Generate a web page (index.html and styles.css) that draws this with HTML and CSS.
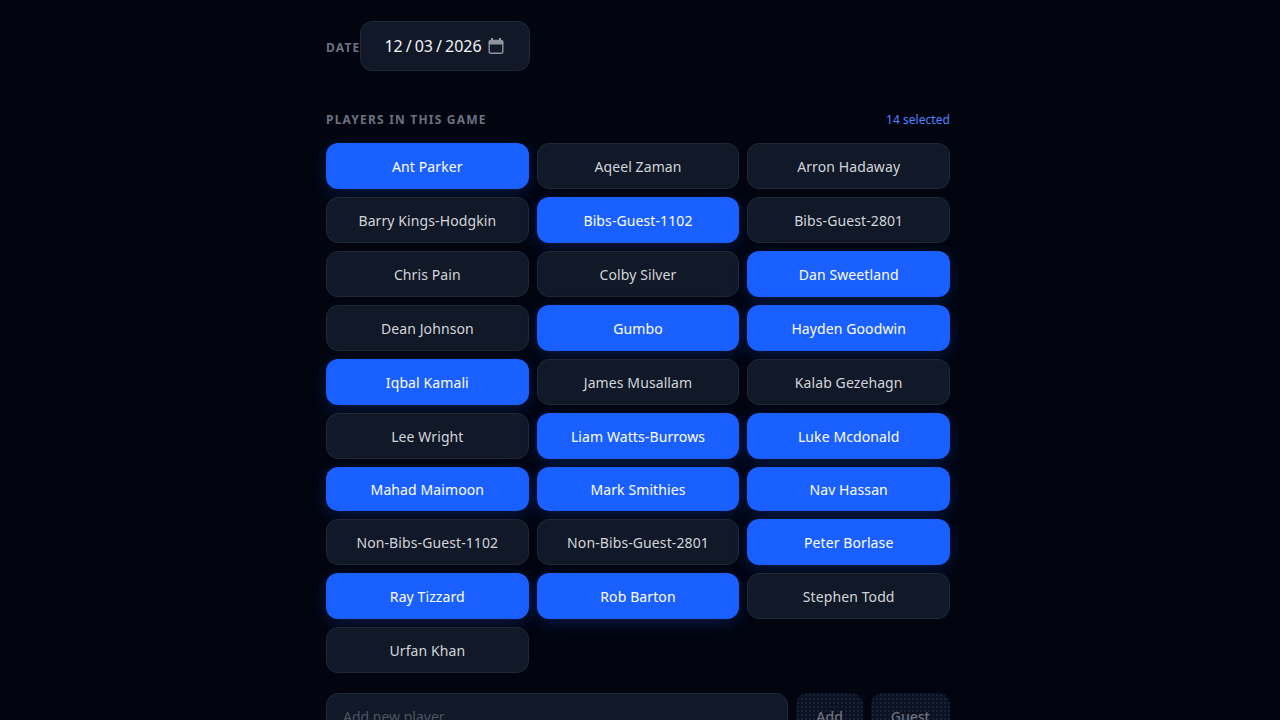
FILE: index.html
```html
<!DOCTYPE html>
<html lang="en">
<head>
<meta charset="utf-8">
<title>New game</title>
<link rel="stylesheet" href="styles.css">
</head>
<body>
<main class="page">
  <div class="date-row">
    <label class="label date-label">DATE</label>
    <div class="date-field">
      <span class="date-value"><span>12</span><span class="sep">/</span><span>03</span><span class="sep">/</span><span>2026</span></span>
      <svg class="cal" viewBox="0 0 16 16" width="16" height="16" aria-hidden="true">
        <path d="M.7 6.6h14.6V4a1.5 1.5 0 0 0-1.5-1.5H2.2A1.5 1.5 0 0 0 .7 4z" fill="currentColor"/>
        <rect x="1.2" y="2.5" width="13.6" height="12.8" rx="1.6" fill="none" stroke="currentColor" stroke-width="1.4"/>
        <path d="M4 0v3M12 0v3" stroke="currentColor" stroke-width="2" fill="none"/>
      </svg>
    </div>
  </div>
  <div class="section-head">
    <span class="label">PLAYERS IN THIS GAME</span>
    <span class="count">14 selected</span>
  </div>
  <div class="players">
    <button class="player on">Ant Parker</button>
    <button class="player">Aqeel Zaman</button>
    <button class="player">Arron Hadaway</button>
    <button class="player">Barry Kings-Hodgkin</button>
    <button class="player on">Bibs-Guest-1102</button>
    <button class="player">Bibs-Guest-2801</button>
    <button class="player">Chris Pain</button>
    <button class="player">Colby Silver</button>
    <button class="player on">Dan Sweetland</button>
    <button class="player">Dean Johnson</button>
    <button class="player on">Gumbo</button>
    <button class="player on">Hayden Goodwin</button>
    <button class="player on">Iqbal Kamali</button>
    <button class="player">James Musallam</button>
    <button class="player">Kalab Gezehagn</button>
    <button class="player">Lee Wright</button>
    <button class="player on">Liam Watts-Burrows</button>
    <button class="player on">Luke Mcdonald</button>
    <button class="player on">Mahad Maimoon</button>
    <button class="player on">Mark Smithies</button>
    <button class="player on">Nav Hassan</button>
    <button class="player">Non-Bibs-Guest-1102</button>
    <button class="player">Non-Bibs-Guest-2801</button>
    <button class="player on">Peter Borlase</button>
    <button class="player on">Ray Tizzard</button>
    <button class="player on">Rob Barton</button>
    <button class="player">Stephen Todd</button>
    <button class="player">Urfan Khan</button>
  </div>
  <div class="add-row">
    <input class="add-input" type="text" placeholder="Add new player">
    <button class="ghost">Add</button>
    <button class="ghost">Guest</button>
  </div>
</main>
</body>
</html>
```
FILE: styles.css
```css
* { box-sizing: border-box; }
html, body { margin: 0; height: 720px; overflow: hidden; }
body { background: #020510; font-family: "Noto Sans", sans-serif; color: #e2e8f0; }
.page { width: 624px; margin-left: 326px; padding-top: 21px; }
.date-row { display: flex; align-items: center; height: 50px; }
.label { font-size: 12px; font-weight: 700; letter-spacing: 1.2px; color: #6b7280; }
.date-label { margin-top: 3px; }
.date-field { width: 170px; height: 50px; display: flex; align-items: center; gap: 6px; padding: 0 23px; background: #111827; border: 1px solid #1f2937; border-radius: 12px; color: #f3f4f6; font-size: 16px; white-space: nowrap; }
.date-value { display: flex; }
.sep { margin: 0 3px; }
.cal { color: #8f949c; flex: none; margin-top: -1px; }
.section-head { display: flex; justify-content: space-between; align-items: center; margin-top: 39px; height: 18px; }
.count { font-size: 12px; font-weight: 450; letter-spacing: .05px; color: #4d84ff; }
.players { display: grid; grid-template-columns: repeat(3, 1fr); gap: 8px; margin-top: 15px; }
.player { font: 450 14px/20px "Noto Sans", sans-serif; letter-spacing: .1px; padding: 13px 12px 11px; border-radius: 12px; background: #111827; border: 1px solid #1f2937; color: #d1d5db; }
.player.on { background: #1a5fff; border: none; color: #fff; box-shadow: 0 4px 16px rgba(26, 95, 255, .22); }
.add-row { display: flex; gap: 8px; margin-top: 20px; }
.add-input { flex: 1; min-width: 0; height: 46px; padding: 0 16px; background: #111827; border: 1px solid #1f2937; border-radius: 12px; font: 14px "Noto Sans", sans-serif; color: #fff; }
.add-input::placeholder { color: #4b5563; }
.ghost { height: 46px; padding: 0 20px; border: none; border-radius: 12px; background-color: #0b1120; background-image: radial-gradient(circle, #172034 .8px, transparent 1px); background-size: 4px 4px; color: #6b7280; font: 500 14px "Noto Sans", sans-serif; }
```
